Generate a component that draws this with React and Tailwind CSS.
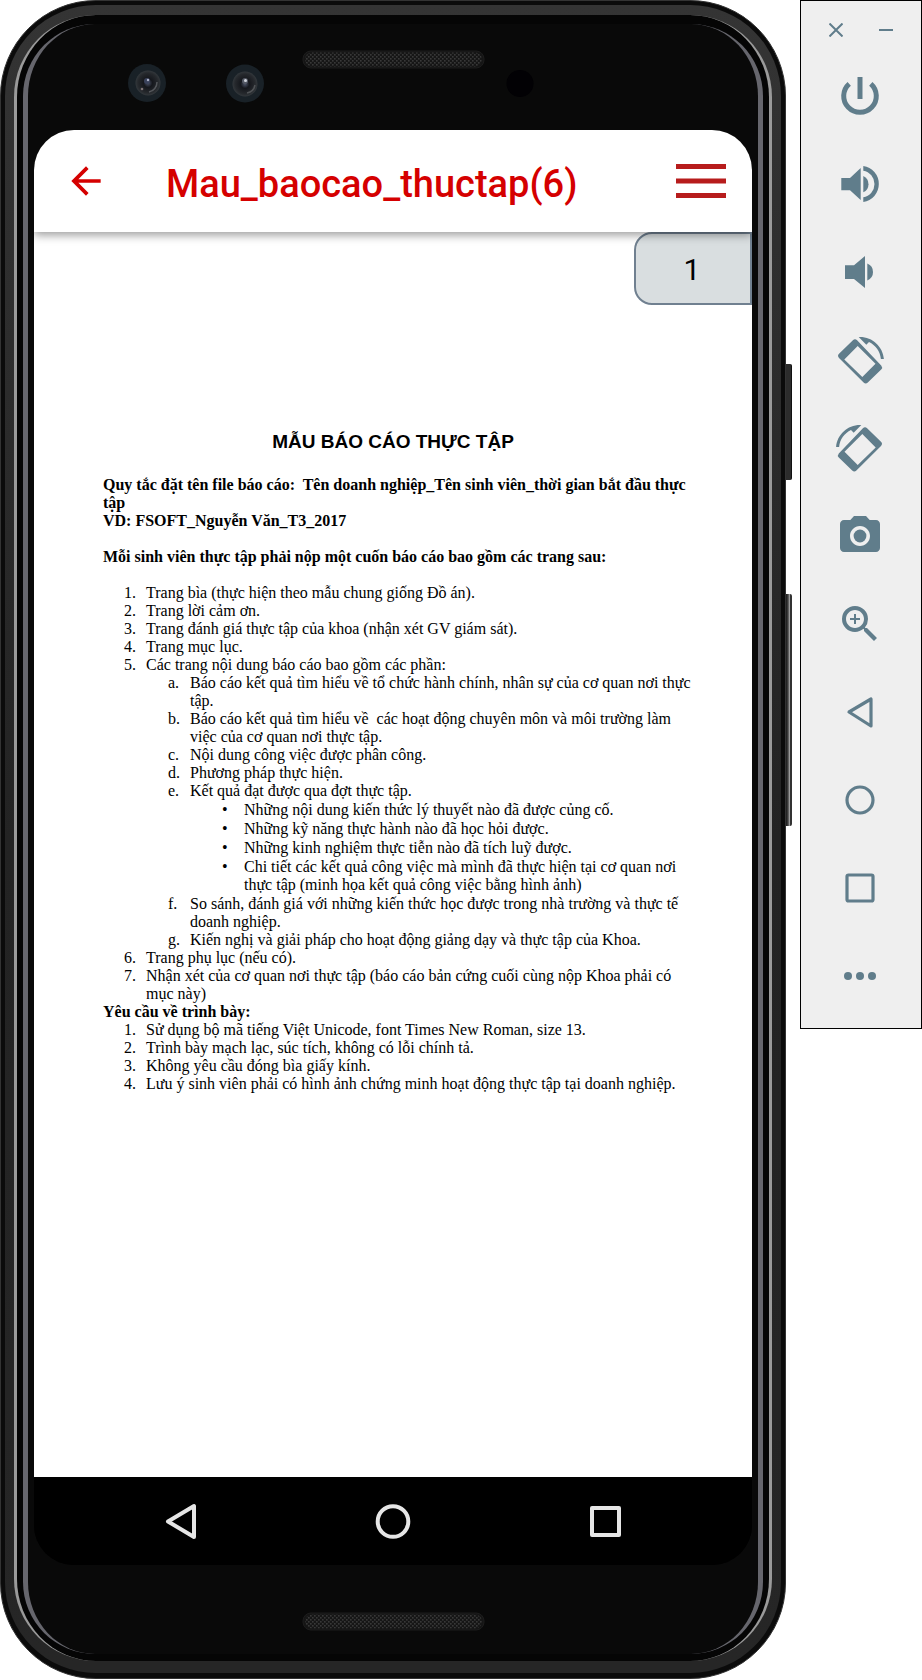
import React from 'react';
import { MdCameraAlt, MdZoomIn, MdArrowBack } from 'react-icons/md';

function PowerIcon() {
  return (
    <svg viewBox="0 0 48 48" className="size-12" fill="none" stroke="currentColor" strokeWidth="5" aria-hidden="true">
      <path d="M24 5V27" />
      <path d="M13.200 11.800A16.300 16.300 0 1 0 34.800 11.800" />
    </svg>
  );
}

function VolumeUpIcon() {
  return (
    <svg viewBox="0 0 48 48" className="size-12" fill="currentColor" aria-hidden="true">
      <path d="M5.3 18H14L24.7 8V40L14 30.3H5.3Z" />
      <path d="M27.3 16A9 9 0 0 1 27.3 32.3Z" />
      <path d="M27.3 6A18.2 18.2 0 0 1 27.3 42V37.3A13.5 13.5 0 0 0 27.3 10.7Z" />
    </svg>
  );
}

function VolumeDownIcon() {
  return (
    <svg viewBox="0 0 48 48" className="size-12" fill="currentColor" aria-hidden="true">
      <path d="M9 17.3H18L29 8V40L18 31H9Z" />
      <path d="M31.3 15.5A9.2 9.2 0 0 1 31.3 32.5Z" />
    </svg>
  );
}

function RotateShape() {
  return (
    <>
      <path d="M33 6c6.5 3.1 11.2 9.4 11.9 17h3C46.9 10.700 36.600 1 24 1l-1.300.1 7.600 7.600z" />
      <path
        fillRule="evenodd"
        d="M16.900 4.200Q19 2.200 21.100 4.200L45.200 29.500Q47 31.500 45.200 33.600L31.800 46.500Q29.700 48.300 27.600 46.500L3 22Q1 19.800 3 17.800ZM8.300 23.500 26.300 41 39.500 27.700 21.700 10Z"
      />
    </>
  );
}

function RotateRightIcon() {
  return (
    <svg viewBox="0 0 48 48" className="size-12 overflow-visible" fill="currentColor" aria-hidden="true">
      <RotateShape />
    </svg>
  );
}

function RotateLeftIcon() {
  return (
    <svg viewBox="0 0 48 48" className="size-12 overflow-visible" fill="currentColor" aria-hidden="true">
      <g transform="matrix(-1 0 0 1 48 0)">
        <RotateShape />
      </g>
    </svg>
  );
}

function BackIcon() {
  return (
    <svg viewBox="0 0 48 48" className="size-12" fill="none" stroke="currentColor" strokeWidth="3.2" strokeLinejoin="round" aria-hidden="true">
      <path d="M13 24 35 11V38Z" />
    </svg>
  );
}

function HomeIcon() {
  return (
    <svg viewBox="0 0 48 48" className="size-12" fill="none" stroke="currentColor" strokeWidth="3.2" aria-hidden="true">
      <circle cx="24" cy="24" r="13" />
    </svg>
  );
}

function OverviewIcon() {
  return (
    <svg viewBox="0 0 48 48" className="size-12" fill="none" stroke="currentColor" strokeWidth="3.2" aria-hidden="true">
      <rect x="11" y="11" width="26" height="26" rx="1.500" />
    </svg>
  );
}

function MoreIcon() {
  return (
    <svg viewBox="0 0 48 48" className="size-12" fill="currentColor" aria-hidden="true">
      <circle cx="12" cy="24" r="4" />
      <circle cx="24" cy="24" r="4" />
      <circle cx="36" cy="24" r="4" />
    </svg>
  );
}

const tools = [
  { label: 'Power', icon: <PowerIcon /> },
  { label: 'Volume up', icon: <VolumeUpIcon /> },
  { label: 'Volume down', icon: <VolumeDownIcon /> },
  { label: 'Rotate right', icon: <RotateRightIcon /> },
  { label: 'Rotate left', icon: <RotateLeftIcon /> },
  { label: 'Take screenshot', icon: <MdCameraAlt className="size-12" /> },
  { label: 'Zoom', icon: <MdZoomIn className="size-12" /> },
  { label: 'Back', icon: <BackIcon /> },
  { label: 'Home', icon: <HomeIcon /> },
  { label: 'Overview', icon: <OverviewIcon /> },
  { label: 'More', icon: <MoreIcon /> },
];

function Toolbar() {
  return (
    <aside className="w-[122px] shrink-0 border border-black bg-[#efefef] pb-2 text-[#607d8b]">
      <div className="flex h-[51px] items-center justify-center gap-[18px] pt-[6px]">
        <button aria-label="Close" className="flex size-8 items-center justify-center">
          <svg viewBox="0 0 14 14" className="size-[14px]" stroke="currentColor" strokeWidth="2" aria-hidden="true">
            <path d="M.5.5 13.500 13.500M13.500.5.5 13.500" />
          </svg>
        </button>
        <button aria-label="Minimize" className="flex size-8 items-center justify-center">
          <svg viewBox="0 0 14 14" className="size-[14px]" stroke="currentColor" strokeWidth="2" aria-hidden="true">
            <path d="M0 7H14" />
          </svg>
        </button>
      </div>
      {tools.map((tool) => (
        <button key={tool.label} aria-label={tool.label} className="flex h-[88px] w-full items-center justify-center pr-0.5">
          {tool.icon}
        </button>
      ))}
    </aside>
  );
}

function Grille({ y }) {
  return (
    <>
      <rect x="275" y={y} width="181" height="17" rx="8" fill="#151515" stroke="#1d1d1d" />
      <rect x="277" y={y + 1.5} width="177" height="14" rx="7" fill="url(#mesh)" />
    </>
  );
}

function MeshDefs() {
  return (
    <defs>
      <pattern id="mesh" width="4" height="4" patternUnits="userSpaceOnUse">
        <rect width="4" height="4" fill="#161616" />
        <rect x="0" y="0" width="1.600" height="1.600" fill="#383838" />
        <rect x="2" y="2" width="1.600" height="1.600" fill="#383838" />
      </pattern>
      <radialGradient id="lens">
        <stop offset="0" stopColor="#4b5266" />
        <stop offset="0.35" stopColor="#15171c" />
        <stop offset="0.8" stopColor="#26292d" />
        <stop offset="1" stopColor="#33383c" />
      </radialGradient>
    </defs>
  );
}

function TopBezel() {
  return (
    <svg viewBox="0 0 730 106" className="h-[106px] w-full" aria-hidden="true">
      <MeshDefs />
      <circle cx="119" cy="59" r="19" fill="#192127" />
      <circle cx="120" cy="59" r="12.500" fill="url(#lens)" />
      <circle cx="119" cy="57" r="3" fill="#39415a" />
      <circle cx="120" cy="56" r="1.200" fill="#aab0c4" />
      <circle cx="114" cy="65" r="1.300" fill="#7d7476" />
      <path d="M121 68A10 10 0 0 0 129 58" fill="none" stroke="#55585c" strokeWidth="1.500" />
      <circle cx="217" cy="59.500" r="19" fill="#192127" />
      <circle cx="217" cy="60" r="12.500" fill="url(#lens)" />
      <circle cx="217" cy="57" r="3" fill="#555a66" />
      <circle cx="217.500" cy="56.500" r="1.500" fill="#d0d4dc" />
      <path d="M219 69A10 10 0 0 0 227 61" fill="none" stroke="#505356" strokeWidth="1.500" />
      <circle cx="492" cy="59.500" r="13.500" fill="#020104" />
      <Grille y={27} />
    </svg>
  );
}

function BottomBezel() {
  return (
    <svg viewBox="0 0 730 89" className="h-[89px] w-full" aria-hidden="true">
      <Grille y={48} />
    </svg>
  );
}

function Item({ marker, children }) {
  return (
    <li className="flex">
      <span className="w-[22px] shrink-0">{marker}</span>
      <div>{children}</div>
    </li>
  );
}

function Bullet({ children }) {
  return (
    <li className="flex pt-px">
      <span className="w-[22px] shrink-0">•</span>
      <div>{children}</div>
    </li>
  );
}

function Report() {
  return (
    <article className="pt-[198px] pb-96 pl-[69px] font-['Liberation_Serif','Times_New_Roman',serif] text-[16px] leading-[18px] whitespace-nowrap text-black">
      <h1 className="mb-[22px] pr-[69px] text-center font-['Liberation_Sans',Arial,sans-serif] text-[19px] leading-[24px] font-bold">
        MẪU BÁO CÁO THỰC TẬP
      </h1>
      <p className="font-bold">
        Quy tắc đặt tên file báo cáo:&nbsp; Tên doanh nghiệp_Tên sinh viên_thời gian bắt đầu thực
        <br />
        tập
      </p>
      <p className="mb-[18px] font-bold">VD: FSOFT_Nguyễn Văn_T3_2017</p>
      <p className="mb-[18px] font-bold">Mỗi sinh viên thực tập phải nộp một cuốn báo cáo bao gồm các trang sau:</p>
      <ol className="pl-[21px]">
        <Item marker="1.">Trang bìa (thực hiện theo mẫu chung giống Đồ án).</Item>
        <Item marker="2.">Trang lời cảm ơn.</Item>
        <Item marker="3.">Trang đánh giá thực tập của khoa (nhận xét GV giám sát).</Item>
        <Item marker="4.">Trang mục lục.</Item>
        <Item marker="5.">
          Các trang nội dung báo cáo bao gồm các phần:
          <ol className="pl-[22px]">
            <Item marker="a.">
              Báo cáo kết quả tìm hiểu về tổ chức hành chính, nhân sự của cơ quan nơi thực
              <br />
              tập.
            </Item>
            <Item marker="b.">
              Báo cáo kết quả tìm hiểu về&nbsp; các hoạt động chuyên môn và môi trường làm
              <br />
              việc của cơ quan nơi thực tập.
            </Item>
            <Item marker="c.">Nội dung công việc được phân công.</Item>
            <Item marker="d.">Phương pháp thực hiện.</Item>
            <Item marker="e.">
              Kết quả đạt được qua đợt thực tập.
              <ul className="pb-px pl-8">
                <Bullet>Những nội dung kiến thức lý thuyết nào đã được củng cố.</Bullet>
                <Bullet>Những kỹ năng thực hành nào đã học hỏi được.</Bullet>
                <Bullet>Những kinh nghiệm thực tiễn nào đã tích luỹ được.</Bullet>
                <Bullet>
                  Chi tiết các kết quả công việc mà mình đã thực hiện tại cơ quan nơi
                  <br />
                  thực tập (minh họa kết quả công việc bằng hình ảnh)
                </Bullet>
              </ul>
            </Item>
            <Item marker="f.">
              So sánh, đánh giá với những kiến thức học được trong nhà trường và thực tế
              <br />
              doanh nghiệp.
            </Item>
            <Item marker="g.">Kiến nghị và giải pháp cho hoạt động giảng dạy và thực tập của Khoa.</Item>
          </ol>
        </Item>
        <Item marker="6.">Trang phụ lục (nếu có).</Item>
        <Item marker="7.">
          Nhận xét của cơ quan nơi thực tập (báo cáo bản cứng cuối cùng nộp Khoa phải có
          <br />
          mục này)
        </Item>
      </ol>
      <p className="font-bold">Yêu cầu về trình bày:</p>
      <ol className="pl-[21px]">
        <Item marker="1.">Sử dụng bộ mã tiếng Việt Unicode, font Times New Roman, size 13.</Item>
        <Item marker="2.">Trình bày mạch lạc, súc tích, không có lỗi chính tả.</Item>
        <Item marker="3.">Không yêu cầu đóng bìa giấy kính.</Item>
        <Item marker="4.">Lưu ý sinh viên phải có hình ảnh chứng minh hoạt động thực tập tại doanh nghiệp.</Item>
      </ol>
    </article>
  );
}

function Screen() {
  return (
    <div className="overflow-hidden rounded-[40px] bg-black">
      <header className="relative z-10 flex h-[102px] items-center bg-white pr-[26px] pl-[30px] shadow-[0_3px_9px_rgba(0,0,0,0.4)]">
        <button aria-label="Back" className="text-[#d50000]">
          <MdArrowBack className="size-11" />
        </button>
        <h2 className="ml-[58px] min-w-0 flex-1 pt-[6px] font-[Roboto,sans-serif] text-[38px] leading-[44px] font-medium whitespace-nowrap text-[#d50000]">
          Mau_baocao_thuctap(6)
        </h2>
        <button aria-label="Menu">
          <svg viewBox="0 0 50 34" className="h-[34px] w-[50px]" fill="#b71c1c" aria-hidden="true">
            <rect y="0" width="50" height="5" />
            <rect y="14.500" width="50" height="5" />
            <rect y="29" width="50" height="5" />
          </svg>
        </button>
      </header>
      <main className="relative bg-white">
        <output
          aria-label="Page"
          className="absolute top-0 right-0 flex h-[73px] w-[118px] items-center justify-center rounded-l-[18px] border-2 border-[#708090] bg-[#d9dee0] pt-0.5 pr-0.5 font-[Roboto,sans-serif] text-[30px] leading-[36px] text-black"
        >
          1
        </output>
        <Report />
      </main>
      <nav className="flex h-[88px] items-center justify-between bg-black px-[123px] text-[#e6e6e6]">
        <button aria-label="Back">
          <svg viewBox="0 0 48 48" className="size-12" fill="none" stroke="currentColor" strokeWidth="4" strokeLinejoin="round" aria-hidden="true">
            <path d="M11 24.500 37 9V40Z" />
          </svg>
        </button>
        <button aria-label="Home">
          <svg viewBox="0 0 48 48" className="size-12" fill="none" stroke="currentColor" strokeWidth="4" aria-hidden="true">
            <circle cx="24" cy="24.500" r="15.300" />
          </svg>
        </button>
        <button aria-label="Overview">
          <svg viewBox="0 0 48 48" className="size-12" fill="none" stroke="currentColor" strokeWidth="4" strokeLinejoin="round" aria-hidden="true">
            <rect x="11" y="11" width="27" height="27" />
          </svg>
        </button>
      </nav>
    </div>
  );
}

function Phone() {
  return (
    <div className="relative min-w-0 flex-1 rounded-[96px] border border-[#333333] bg-[#0b0b0b] p-1 pb-[5px]">
      <div className="absolute top-[363px] -right-[7px] h-[116px] w-[6px] rounded-r-[2px] border-r border-[#111111] bg-[#2c2c2c]" />
      <div className="absolute top-[593px] -right-[7px] h-[232px] w-[6px] rounded-r-[2px] border-r-2 border-[#333333] bg-linear-to-r from-[#1a1a1a] via-[#444444] to-[#bbbbbb]" />
      <div className="rounded-[91px] bg-linear-to-b from-[#343434] via-[#232323] to-[#262626] px-[9px] pt-[10px] pb-[12px]">
        <div className="rounded-[82px] border-x-[3px] border-[#9a9a9a] bg-[#050505] px-[6px] pt-[9px] pb-[7px]">
          <div className="rounded-[72px] border-x-[5px] border-[#66666d] bg-[#090909]">
            <TopBezel />
            <div className="px-[6px]">
              <Screen />
            </div>
            <BottomBezel />
          </div>
        </div>
      </div>
    </div>
  );
}

export default function App() {
  return (
    <div className="flex items-start gap-[14px] bg-white">
      <Phone />
      <Toolbar />
    </div>
  );
}
